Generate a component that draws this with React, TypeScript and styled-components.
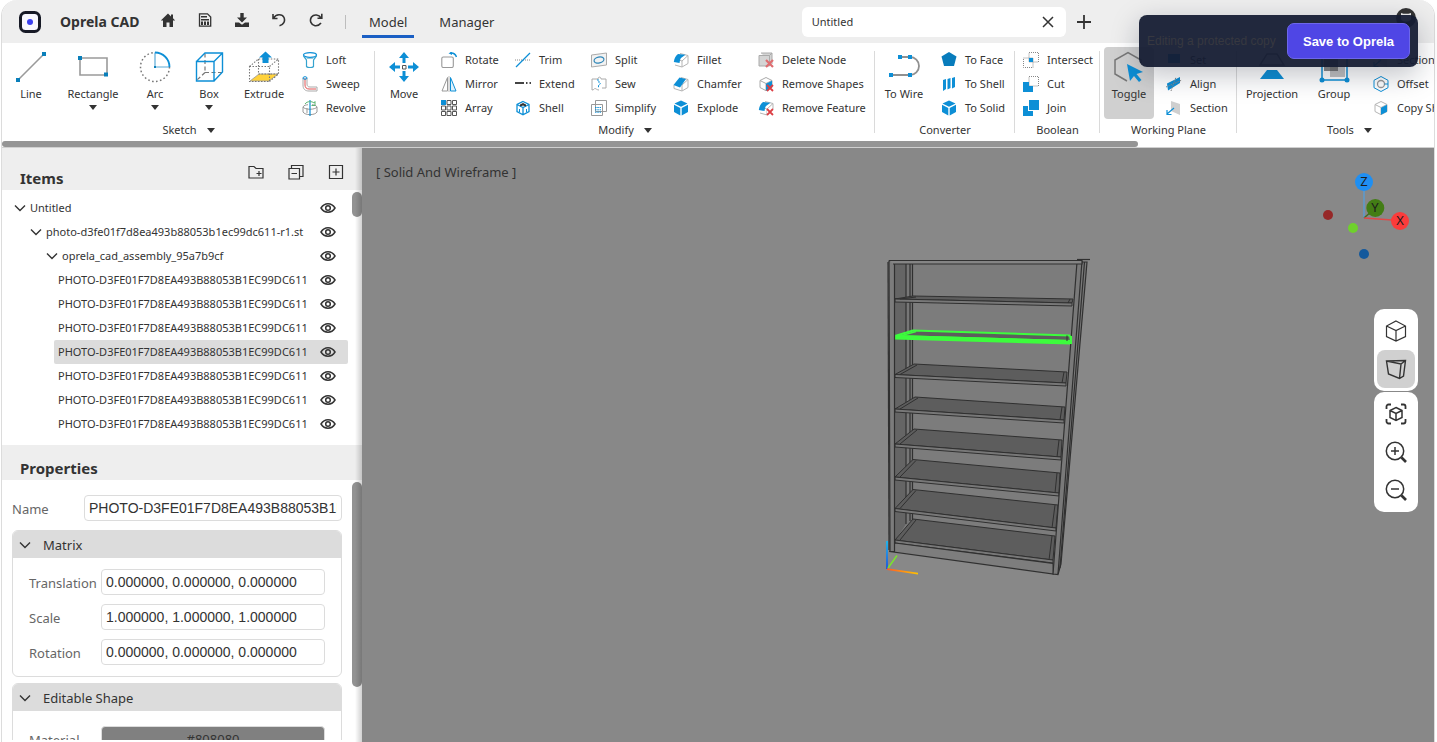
import React, { useState } from "react";
import styled, { createGlobalStyle } from "styled-components";

const BLUE = "#0d8fd6";
const GREY = "#9a9a9a";
const INK = "#333333";

const GlobalStyle = createGlobalStyle`
  * { box-sizing: border-box; }
  body {
    margin: 0;
    background: #ffffff;
    color: ${INK};
    font-family: "Noto Sans", sans-serif;
    font-size: 11px;
    line-height: 16px;
  }
  button {
    border: 0;
    padding: 0;
    background: none;
    color: inherit;
    font: inherit;
    cursor: pointer;
  }
  svg { display: block; flex: none; }
`;

/* ---------- Icons ---------- */

const Svg = ({ size = 16, box = size, children }: { size?: number; box?: number; children: React.ReactNode }) => (
  <svg width={size} height={size} viewBox={`0 0 ${box} ${box}`} fill="none" aria-hidden="true">
    {children}
  </svg>
);

const Cross = () => <path d="M9 9l6 6M15 9l-6 6" stroke="#dc3f45" strokeWidth="1.800" />;

const cubeEdges = "M8 1.500l6 3v7l-6 3.200-6-3.200v-7zM2 4.500l6 3 6-3M8 7.500v7";

const big: Record<string, React.ReactNode> = {
  Line: (
    <>
      <path d="M4 28L28 4" stroke={GREY} strokeWidth="1.600" />
      <path d="M1 27h4v4H1zM27 1h4v4h-4z" fill="#0a7fba" />
    </>
  ),
  Rectangle: (
    <>
      <path d="M3 7h27v17H3z" stroke={GREY} strokeWidth="1.600" />
      <path d="M1 5h4v4H1zM27 21.500h4v4h-4z" fill="#0a7fba" />
    </>
  ),
  Arc: (
    <>
      <circle cx="16" cy="16" r="14.500" stroke="#777" strokeWidth="1.500" strokeDasharray="1.600 2.400" />
      <path d="M16 0h16v16H16z" fill="#fff" />
      <path d="M16 15.500V1.500M16.500 16H30" stroke="#5aa9d6" strokeWidth="1.200" />
      <path d="M16 1.500A14.500 14.500 0 0 1 30.500 16" stroke={BLUE} strokeWidth="1.800" />
      <path d="M15 15h2v2h-2z" fill="#0a7fba" />
    </>
  ),
  Box: (
    <>
      <path d="M12 2.500v19M12 21.500h17M12 21.500L4 29" stroke="#777" strokeWidth="1.200" strokeDasharray="4 2.500" />
      <path d="M3.500 10.500h17.500v19.500H3.500zM3.500 10.500l8.500-8.500h17.500v19l-8.500 9M21 10.500l8.500-8.500" stroke={BLUE} strokeWidth="1.400" />
    </>
  ),
  Extrude: (
    <>
      <path d="M2 30l9-7h19l-9 7z" fill="#ffd23c" stroke="#999" strokeWidth=".8" />
      <path d="M1.500 15.500h20v15h-20zM1.500 15.500l9-7.500h20v15l-9 7.500M21.500 15.500l9-7.500M10.500 8v15h20" stroke="#777" strokeWidth="1.100" strokeDasharray="1.500 1.500" />
      <path d="M17.500.5l6.500 6h-3.500v5.500h-6V6.500H11z" fill={BLUE} />
    </>
  ),
  Move: (
    <>
      <path d="M16 1l5 6h-3.500v5h-3V7H11zM16 31l-5-6h3.500v-5h3v5H21zM1 16l6-5v3.500h5v3H7V21zM31 16l-6 5v-3.500h-5v-3h5V11z" fill={BLUE} />
      <path d="M14.500 14.500h3.500v3.500h-3.500z" stroke="#555" />
    </>
  ),
  "To Wire": (
    <>
      <path d="M13 6h9a9 9 0 0 1 0 18H4" stroke="#909090" strokeWidth="1.800" />
      <path d="M10 4h4v4h-4zM20 4h4v4h-4zM1 22h4v4H1zM20 22h4v4h-4z" fill={BLUE} />
    </>
  ),
  Toggle: (
    <>
      <path d="M28 12V9L15 1.500 2 9v14l12 7" stroke="#777" strokeWidth="1.500" />
      <path d="M14 13l16 8-6.500 2 5 6-2.500 2-5-6-4 5z" fill={BLUE} />
    </>
  ),
  Projection: (
    <>
      <path d="M4 14l7-11h10l7 11z" stroke="#777" strokeWidth="1.400" />
      <path d="M4 28l7-9h10l7 9z" fill={BLUE} />
    </>
  ),
  Group: (
    <>
      <path d="M6 4h14v16H6z" fill="#8a8a8a" />
      <path d="M12 15h15v11H12z" fill="#c2c2c2" />
      <path d="M12 15h8v5h-8z" fill="#777" />
      <path d="M4 3h25v26H4z" stroke={BLUE} strokeWidth="1.500" />
      <circle cx="4" cy="29" r="2.500" fill={BLUE} />
      <circle cx="29" cy="29" r="2.500" fill={BLUE} />
      <circle cx="4" cy="3" r="2.500" fill={BLUE} />
      <circle cx="29" cy="3" r="2.500" fill={BLUE} />
    </>
  ),
};

const FilletShape = () => (
  <>
    <path d="M7 1.500l8 2v8l-6 3.500-7-2M9 15V9l6-5.500M9 9L6 8" stroke="#b5b5b5" />
    <path d="M5 2l7.500 .8-4.500 3.200c-1 1-1 3-1.500 5L.8 10C1.500 6 2.500 4 5 2z" fill={BLUE} />
  </>
);

const SolidCube = () => (
  <path d="M8 .5l6.500 3L8 6.800 1.500 3.500zM1 4.800l6.300 3.200v7.500L1 12zM15 4.800L8.700 8v7.500L15 12z" fill={BLUE} />
);

const small: Record<string, React.ReactNode> = {
  Loft: (
    <>
      <ellipse cx="8" cy="3" rx="6.500" ry="2.300" stroke={BLUE} strokeWidth="1.300" />
      <path d="M1.500 3.500c0 2 3 3 3 5v6c1.500 1.500 5.500 1.500 7 0v-6c0-2 3-3 3-5" stroke="#35a3cf" strokeWidth="1.200" />
      <path d="M5 6.500h6" stroke="#9cd" />
    </>
  ),
  Sweep: (
    <>
      <path d="M1 2v7c0 4 2 6 6 6h8v-4H8c-2 0-3-1-3-3V2" stroke="#aaa" />
      <path d="M3 2v7c0 2.500 1.500 4 4 4h7" stroke="#e05252" />
      <ellipse cx="3" cy="2" rx="2" ry="1.300" stroke={BLUE} />
    </>
  ),
  Revolve: (
    <>
      <path d="M1 7v5c2 3.500 12 3.500 14 0V7c-2 3-12 3-14 0z" stroke="#999" />
      <path d="M1 7c1-2 3-2 5-2.300M15 7c-1-2-3-2-5-2.300M5 8v5" stroke="#999" />
      <path d="M8 0v16" stroke={BLUE} strokeWidth="1.200" />
      <path d="M3 4c2-3 7-3 9-1l1-1.500v4H9.500" stroke="#5cb573" />
    </>
  ),
  Rotate: (
    <>
      <rect x=".8" y="5" width="11.500" height="10.500" rx="1.500" stroke="#999" strokeWidth="1.100" />
      <path d="M9 1c3-.500 5.500 1 6.500 4" stroke={BLUE} strokeWidth="1.500" />
      <path d="M11 0L7.500 1.200 11 3" fill={BLUE} />
    </>
  ),
  Mirror: (
    <>
      <path d="M6.500 1.500v13.500H1z" stroke="#999" />
      <path d="M9.500 1.500v13.500H15z" stroke={BLUE} fill="#dff1fb" />
      <path d="M8 0v16" stroke="#bbb" />
    </>
  ),
  Array: (
    <>
      <path d="M0 0h5v5H0z" fill={BLUE} />
      <path d="M6 .5h4v4H6zM11.500.5h4v4h-4zM.5 6h4v4h-4zM6 6h4v4H6zM11.500 6h4v4h-4zM.5 11.500h4v4h-4zM6 11.500h4v4H6zM11.500 11.500h4v4h-4z" stroke="#555" />
    </>
  ),
  Trim: (
    <>
      <path d="M0 8h16" stroke="#888" strokeDasharray="1 1" />
      <path d="M1 15L15 1" stroke={BLUE} strokeWidth="1.200" />
    </>
  ),
  Extend: <path d="M0 7h9M11 7h1.500M14.500 7H16" stroke="#444" strokeWidth="2" />,
  Shell: (
    <>
      <path d={cubeEdges} stroke={BLUE} strokeWidth="1.300" />
      <path d="M8 3l3 1.500v2L8 5.500 5 6.500v-2z" fill="#333" />
      <path d="M4.500 9v3M11.500 9v3" stroke={BLUE} />
    </>
  ),
  Split: (
    <>
      <path d="M.5 3l15-2v12l-15 2z" stroke="#aaa" fill="#f2f2f2" />
      <ellipse cx="8" cy="8" rx="5" ry="3" transform="rotate(-12 8 8)" stroke="#2e86b8" strokeWidth="1.200" />
    </>
  ),
  Sew: (
    <>
      <path d="M7 3H1v11c2 0 2-1.500 3-1.500s2 1.500 4 1.500M7 3c0-2.500 3-2.500 3 0h5v9h-4" stroke="#aaa" />
      <path d="M7 3v3c3-1 3 3 .5 3V12" stroke={BLUE} strokeDasharray="2 1" />
    </>
  ),
  Simplify: (
    <>
      <path d="M.5 4.500h11v11H.5zM4.500.5h11v11h-11z" stroke="#999" />
      <path d="M4 7.500h6M4 9.800h6M4 12.200h6" stroke={BLUE} strokeDasharray="1.500 .8" />
    </>
  ),
  Fillet: <FilletShape />,
  Chamfer: (
    <>
      <path d="M8 1.500l7 2v8L9 15l-8-2.500V9M9 15V9l6-5.500" stroke="#b5b5b5" />
      <path d="M6.500 1.500l6.500 1.500-6 8.500L.5 9z" fill={BLUE} />
    </>
  ),
  Explode: <SolidCube />,
  "Delete Node": (
    <>
      <path d="M3 1h11v11M1 3.500h10.500V14H1zM11.500 3.500L14 1" fill="#d4d4d4" stroke="#aaa" />
      <path d="M8 8l7 7M15 8l-7 7" stroke="#df6d70" strokeWidth="2.200" />
    </>
  ),
  "Remove Shapes": (
    <>
      <path d={cubeEdges} stroke="#aaa" />
      <path d="M8 7.800l6-3v7l-6 3z" fill={BLUE} />
      <Cross />
    </>
  ),
  "Remove Feature": (
    <>
      <FilletShape />
      <path d="M9 9h7v7H9z" fill="#fff" />
      <Cross />
    </>
  ),
  "To Face": <path d="M8 0l7.500 4.500-2.500 9.500H3L.5 4.500z" fill="#087cbc" />,
  "To Shell": <path d="M2 4l3-1v10l-3 2zM6.500 3l3-1v10l-3 1.500zM11 2l3-1v10l-3 1.500z" fill={BLUE} />,
  "To Solid": <SolidCube />,
  Intersect: (
    <>
      <path d="M6 .5h9.500V10H6zM.5 6H10v9.500H.5z" stroke="#888" strokeDasharray="1 1" />
      <path d="M6 6h4v4H6z" fill={BLUE} />
    </>
  ),
  Cut: (
    <>
      <path d="M6 .5h9.500V10H6z" stroke="#888" strokeDasharray="1 1" />
      <path d="M0 6h6v4h4v6H0z" fill={BLUE} />
    </>
  ),
  Join: <path d="M6 0h10v10H6zM0 6h5v5h5v5H0z" fill={BLUE} />,
  Set: <path d="M2 2h12v9H2z" fill={BLUE} />,
  Align: (
    <>
      <path d="M1 7.500l13-6.500v6L2 14.500z" fill={BLUE} />
      <path d="M0 11L16 4M5 15l5-14" stroke="#888" strokeDasharray="1.500 1" />
    </>
  ),
  Section: (
    <>
      <path d="M5 1l9 3v11l-9-4z" fill="#cfcfcf" />
      <path d="M8 8l-7 6M1 10v4.500h4.500" stroke={BLUE} strokeWidth="1.200" />
    </>
  ),
  Offset: (
    <>
      <path d="M8 .5l7 3.800v7.400L8 15.500 1 11.700V4.300z" stroke={BLUE} />
      <circle cx="8" cy="8" r="3.500" stroke="#999" strokeWidth="1.300" />
      <path d="M11.500 8H15" stroke={BLUE} />
    </>
  ),
  "Copy Shape": (
    <>
      <path d={cubeEdges} stroke="#b5b5b5" />
      <path d="M8 7.800l6-3v7l-6 3z" fill={BLUE} />
    </>
  ),
};

const Eye = () => (
  <Svg>
    <path d="M1 8c3.500-5.600 10.500-5.600 14 0-3.500 5.600-10.500 5.600-14 0z" stroke={INK} strokeWidth="1.500" />
    <circle cx="8" cy="8" r="2.300" stroke={INK} strokeWidth="1.500" />
  </Svg>
);

const Chevron = () => (
  <Svg size={12}>
    <path d="M1 3.500l5 5 5-5" stroke={INK} strokeWidth="1.400" />
  </Svg>
);

/* ---------- Window and title bar ---------- */

const Window = styled.div`
  display: flex;
  flex-direction: column;
  height: 100vh;
  margin: 0 2px 0 1px;
  border: solid #dcdcdc;
  border-width: 0 1px;
  border-radius: 16px 16px 0 0;
  overflow: hidden;
`;

const TitleBar = styled.header`
  display: flex;
  align-items: center;
  flex: none;
  height: 43px;
  padding: 0 18px 0 17px;
  background: #eeeeee;
`;

const Brand = styled.div`
  display: flex;
  align-items: center;
  gap: 19px;
  width: 137px;
  font-size: 14px;
  font-weight: 700;
  line-height: 20px;
  white-space: nowrap;
`;

const QuickActions = styled.div`
  display: flex;
  gap: 13px;
  height: 28px;
  padding-right: 17px;
`;

const IconButton = styled.button<{ $w?: number }>`
  display: flex;
  align-items: center;
  justify-content: center;
  width: ${(p) => p.$w ?? 24}px;
  height: 24px;
`;

const Divider = styled.span`
  width: 1px;
  height: 14px;
  background: #bdbdbd;
`;

const Tabs = styled.nav`
  display: flex;
  gap: 18px;
  margin-left: 16px;
`;

const Tab = styled.button<{ $active?: boolean }>`
  height: 32px;
  padding: 4px 7px 0;
  border-bottom: 3px solid ${(p) => (p.$active ? "#1a5fc4" : "transparent")};
  font-size: 13px;
  line-height: 20px;
`;

const DocTabs = styled.div`
  display: flex;
  align-items: center;
  gap: 6px;
  margin: 0 auto;
`;

const DocTab = styled.div`
  display: flex;
  align-items: center;
  justify-content: space-between;
  width: 264px;
  height: 30px;
  padding: 0 6px 0 10px;
  border-radius: 6px;
  background: #ffffff;
`;

/* ---------- Ribbon ---------- */

const RibbonArea = styled.section`
  flex: none;
  background: #ffffff;
  border-bottom: 1px solid #d0d0d0;
  overflow: hidden;
`;

const Ribbon = styled.div`
  display: flex;
  height: 98px;
  padding-top: 4px;
`;

const Group = styled.div`
  position: relative;
  display: flex;
  flex-direction: column;
  flex: none;
  &::after {
    content: "";
    position: absolute;
    right: 0;
    top: 4px;
    width: 1px;
    height: 82px;
    background: #dadada;
  }
`;

const GroupBody = styled.div<{ $flush?: boolean }>`
  display: flex;
  height: 72px;
  padding-left: ${(p) => (p.$flush ? 0 : 4)}px;
  padding-right: 1px;
`;

const GroupLabel = styled.div`
  display: flex;
  align-items: center;
  justify-content: center;
  gap: 10px;
  height: 24px;
`;

const Caret = styled.span`
  border: 4px solid transparent;
  border-top: 5px solid ${INK};
  border-bottom: 0;
`;

const BigButton = styled.button<{ $w: number; $active?: boolean }>`
  display: flex;
  flex-direction: column;
  align-items: center;
  flex: none;
  gap: 3px;
  width: ${(p) => p.$w}px;
  margin-right: 4px;
  padding-top: 4px;
  border-radius: 4px;
  background: ${(p) => (p.$active ? "#d0d0d0" : "transparent")};
  white-space: nowrap;
`;

const Column = styled.div<{ $w: number }>`
  display: flex;
  flex-direction: column;
  flex: none;
  width: ${(p) => p.$w}px;
  padding: 1px 0 0 8px;
`;

const SmallButton = styled.button`
  display: flex;
  align-items: center;
  flex: none;
  gap: 8px;
  height: 24px;
  white-space: nowrap;
`;

const HorizontalThumb = styled.div`
  width: 79.3%;
  height: 6px;
  border-radius: 3px;
  background: #959595;
`;

type BigSpec = { name: string; w: number; caret?: boolean; active?: boolean };
type ColSpec = { w: number; items: string[] };
type GroupSpec = { label: string; caret?: boolean; bigs: BigSpec[]; cols: ColSpec[] };

const groups: GroupSpec[] = [
  {
    label: "Sketch",
    caret: true,
    bigs: [
      { name: "Line", w: 50 },
      { name: "Rectangle", w: 66, caret: true },
      { name: "Arc", w: 50, caret: true },
      { name: "Box", w: 50, caret: true },
      { name: "Extrude", w: 52 },
    ],
    cols: [{ w: 80, items: ["Loft", "Sweep", "Revolve"] }],
  },
  {
    label: "Modify",
    caret: true,
    bigs: [{ name: "Move", w: 50 }],
    cols: [
      { w: 74, items: ["Rotate", "Mirror", "Array"] },
      { w: 76, items: ["Trim", "Extend", "Shell"] },
      { w: 82, items: ["Split", "Sew", "Simplify"] },
      { w: 85, items: ["Fillet", "Chamfer", "Explode"] },
      { w: 124, items: ["Delete Node", "Remove Shapes", "Remove Feature"] },
    ],
  },
  {
    label: "Converter",
    bigs: [{ name: "To Wire", w: 50 }],
    cols: [{ w: 81, items: ["To Face", "To Shell", "To Solid"] }],
  },
  { label: "Boolean", bigs: [], cols: [{ w: 84, items: ["Intersect", "Cut", "Join"] }] },
  {
    label: "Working Plane",
    bigs: [{ name: "Toggle", w: 50, active: true }],
    cols: [{ w: 78, items: ["Set", "Align", "Section"] }],
  },
  {
    label: "Tools",
    caret: true,
    bigs: [
      { name: "Projection", w: 62 },
      { name: "Group", w: 54 },
    ],
    cols: [{ w: 96, items: ["Section", "Offset", "Copy Shape"] }],
  },
];

/* ---------- Side panel ---------- */

const Workspace = styled.div`
  display: flex;
  flex: 1;
  min-height: 0;
`;

const Side = styled.aside`
  position: relative;
  display: flex;
  flex-direction: column;
  flex: none;
  width: 360px;
  padding-bottom: 2px;
  background: #ffffff;
  overflow: hidden;
  &::after {
    content: "";
    position: absolute;
    inset: 0 0 0 auto;
    width: 7px;
    background: linear-gradient(to right, transparent, rgba(0, 0, 0, 0.18));
    pointer-events: none;
  }
`;

const PanelHead = styled.div<{ $h: number }>`
  display: flex;
  align-items: flex-end;
  justify-content: space-between;
  flex: none;
  height: ${(p) => p.$h}px;
  padding: 0 14px 1px 18px;
  background: #eeeeee;
`;

const PanelTitle = styled.h2`
  margin: 0;
  font-size: 15px;
  font-weight: 700;
  line-height: 22px;
`;

const HeadActions = styled.div`
  display: flex;
  gap: 16px;
  padding-bottom: 5px;
`;

const ScrollRegion = styled.div<{ $h?: number }>`
  position: relative;
  flex: ${(p) => (p.$h ? "none" : "1")};
  height: ${(p) => (p.$h ? `${p.$h}px` : "auto")};
  min-height: 0;
  overflow: hidden;
`;

const Thumb = styled.div<{ $h: number }>`
  position: absolute;
  top: 2px;
  right: 0;
  width: 10px;
  height: ${(p) => p.$h}px;
  border-radius: 5px;
  background: #929292;
`;

const Tree = styled.ul`
  margin: 0;
  padding: 6px 14px 0 8px;
  list-style: none;
`;

const TreeRow = styled.li<{ $indent: number; $selected?: boolean }>`
  display: flex;
  align-items: center;
  gap: 4px;
  height: 24px;
  margin-left: ${(p) => p.$indent}px;
  padding: 0 12px 0 4px;
  border-radius: 2px;
  background: ${(p) => (p.$selected ? "#dcdcdc" : "transparent")};
`;

const TreeName = styled.span`
  flex: 1;
  margin-right: 4px;
  overflow: hidden;
  white-space: nowrap;
`;

const Form = styled.div`
  display: flex;
  flex-direction: column;
  padding: 15px 20px 0 10px;
`;

const Field = styled.label`
  display: flex;
  align-items: center;
  height: 26px;
  color: #666666;
  font-size: 13px;
  line-height: 20px;
`;

const FieldName = styled.span<{ $w: number }>`
  flex: none;
  width: ${(p) => p.$w}px;
  padding-top: 2px;
`;

const TextInput = styled.input`
  flex: 1;
  min-width: 0;
  height: 26px;
  padding: 0 4px;
  border: 1px solid #dcdcdc;
  border-radius: 4px;
  color: ${INK};
  background: #ffffff;
  font: 14px "Liberation Sans", sans-serif;
`;

const Card = styled.section`
  margin-top: 9px;
  border: 1px solid #dcdcdc;
  border-radius: 6px;
  overflow: hidden;
  & + & { margin-top: 6px; }
`;

const CardHead = styled.button`
  display: flex;
  align-items: center;
  gap: 12px;
  width: 100%;
  height: 27px;
  padding: 0 6px;
  background: #dcdcdc;
  font-size: 13px;
`;

const CardBody = styled.div`
  display: flex;
  flex-direction: column;
  gap: 9px;
  padding: 11px 16px;
`;

const Swatch = styled.button`
  flex: 1;
  height: 26px;
  border: 1px solid #dcdcdc;
  border-radius: 4px;
  color: #333333;
  background: #808080;
  font-size: 13px;
`;

const MaterialBody = styled(CardBody)`
  padding-top: 15px;
`;

/* ---------- Viewport ---------- */

const Viewport = styled.main`
  position: relative;
  flex: 1;
  min-width: 0;
  background: #888888;
`;

const Scene = styled.svg`
  position: absolute;
  inset: 0;
  width: 100%;
  height: 100%;
`;

const ModeLabel = styled.div`
  position: absolute;
  left: 14px;
  top: 14px;
  font-size: 13px;
  line-height: 20px;
`;

const Gizmo = styled.svg`
  position: absolute;
  top: 22px;
  right: 20px;
`;

const ViewTools = styled.div`
  position: absolute;
  right: 16px;
  top: 161px;
  display: flex;
  flex-direction: column;
  gap: 1px;
`;

const ToolStack = styled.div`
  display: flex;
  flex-direction: column;
  padding: 3px;
  border-radius: 10px;
  background: #ffffff;
`;

const ViewButton = styled.button<{ $active?: boolean }>`
  display: flex;
  align-items: center;
  justify-content: center;
  width: 38px;
  height: 38px;
  border-radius: 8px;
  background: ${(p) => (p.$active ? "#d0d0d0" : "transparent")};
`;

/* ---------- Save banner ---------- */

const Banner = styled.div`
  position: absolute;
  top: 15px;
  right: 19px;
  display: flex;
  align-items: center;
  justify-content: space-between;
  width: 279px;
  height: 52px;
  padding: 0 8px;
  border-radius: 8px;
  color: #373840;
  background: rgba(21, 28, 51, 0.95);
  box-shadow: 0 8px 28px rgba(15, 23, 42, 0.26);
  font: 12px "Liberation Sans", sans-serif;
`;

const SaveButton = styled.button`
  width: 123px;
  height: 36px;
  border: 1px solid #6d67ea;
  border-radius: 7px;
  color: #ffffff;
  background: #4f46e5;
  font: 700 13px "Liberation Sans", sans-serif;
`;

/* Shelf corners: back-left, back-right, front-right, front-left, plus lip thickness */
type Shelf = { pts: [number, number][]; lip: number; picked?: boolean };

const shelves: Shelf[] = [
  { pts: [[913, 296], [1073, 299], [1072, 303], [895, 299]], lip: 3 },
  { pts: [[914, 364], [1067, 372], [1066, 383], [895, 374.5]], lip: 3 },
  { pts: [[915, 397], [1065, 407], [1064, 420], [895, 409]], lip: 3 },
  { pts: [[914, 429], [1062, 440], [1061, 457], [895, 444]], lip: 3 },
  { pts: [[913, 459.5], [1060, 473], [1059, 493], [895, 477]], lip: 3 },
  { pts: [[913, 489.5], [1058, 505], [1056, 528], [895, 508.5]], lip: 3 },
  { pts: [[913, 519], [1055, 536], [1053, 560], [895, 540]], lip: 3 },
  { pts: [[913, 330.5], [1070, 335.5], [1071, 341], [895, 336]], lip: 2.5, picked: true },
];

const path = (pts: number[][]) => "M" + pts.map((p) => p.join(" ")).join("L") + "Z";

const ShelfShape = ({ shelf }: { shelf: Shelf }) => {
  const [bl, br, fr, fl] = shelf.pts;
  const lip = [fl, fr, [fr[0], fr[1] + shelf.lip], [fl[0], fl[1] + shelf.lip]];
  const line = shelf.picked ? "#3dfc3d" : "#303030";
  return (
    <g stroke={line} strokeWidth={shelf.picked ? 2 : 1} strokeLinejoin="round">
      <path d={path(shelf.pts)} fill="#5d5d5d" />
      <path d={path(lip)} fill={shelf.picked ? "#3dfc3d" : "#787878"} />
      <path
        d={`M${fl[0] + 5} ${fl[1]}L${bl[0] + 3} ${bl[1] + 1}`}
        strokeWidth={shelf.picked ? 1.5 : 1}
      />
      <path d={`M${fr[0] - 4} ${fr[1]}L${br[0] - 3} ${br[1]}`} stroke="#303030" strokeWidth="1" />
    </g>
  );
};

const Bookcase = () => (
  <Scene viewBox="362 148 1072 594" preserveAspectRatio="xMidYMid meet" role="img" aria-label="Bookcase model">
    <defs>
      <linearGradient id="axisZ" x1="0" y1="0" x2="0" y2="1">
        <stop offset="0" stopColor="#22b4e8" />
        <stop offset="1" stopColor="#2456d8" />
      </linearGradient>
      <linearGradient id="axisX">
        <stop offset="0" stopColor="#ff5a28" />
        <stop offset="1" stopColor="#ffc400" />
      </linearGradient>
    </defs>
    <path d="M895 264L1077 264L1053 563L895 543Z" fill="#7c7c7c" />
    <path d="M895 264H906V524L895 541Z" fill="#656565" />
    <path d="M906 264H912V521L906 527Z" fill="#777" />
    <g stroke="#303030" strokeWidth="1.200" fill="none">
      <path d="M906 264V524M910 264V521M912.500 264V520" />
    </g>
    {shelves.map((s, i) => (
      <ShelfShape key={i} shelf={s} />
    ))}
    <g stroke="#303030" strokeWidth="1.200">
      <path d="M895 543L1053 563.500L1053.500 574L890 551.500Z" fill="#7d7d7d" />
      <path d="M1077 262H1087L1061 564L1058 574.500L1053 574Z" fill="#797979" />
      <path d="M1082 261L1058 574M1084.500 262L1060 568" fill="none" />
      <path d="M889 261H894.500V551.500L890 551.500Z" fill="#7c7c7c" />
      <path d="M888 262L889 550" fill="none" />
      <path d="M889 260.500H1082V264H893" fill="#858585" />
      <path d="M1077 259.500H1090" fill="none" />
    </g>
    <path d="M1071 336V344" stroke="#3dfc3d" strokeWidth="2" />
    <path d="M886 541h2v28h-2z" fill="url(#axisZ)" />
    <path d="M888 568L897 555.500" stroke="#7be32c" strokeWidth="1.500" />
    <path d="M887 568.200L918 572.800V574.600L887 570Z" fill="url(#axisX)" />
  </Scene>
);

const PART = "PHOTO-D3FE01F7D8EA493B88053B1EC99DC611";

const treeRows = [
  { name: "Untitled", indent: 0, open: true },
  { name: "photo-d3fe01f7d8ea493b88053b1ec99dc611-r1.st", indent: 16, open: true },
  { name: "oprela_cad_assembly_95a7b9cf", indent: 32, open: true },
  ...Array.from({ length: 7 }, () => ({ name: PART, indent: 44, open: false })),
];

const matrix = [
  ["Translation", "0.000000, 0.000000, 0.000000"],
  ["Scale", "1.000000, 1.000000, 1.000000"],
  ["Rotation", "0.000000, 0.000000, 0.000000"],
];

export default function App() {
  const [selected, setSelected] = useState(6);

  return (
    <>
      <GlobalStyle />
      <Window>
        <TitleBar>
          <Brand>
            <Svg size={22}>
              <rect x="1.500" y="1.500" width="19" height="19" rx="5" fill="#f8f8ff" stroke="#171a26" strokeWidth="3" />
              <circle cx="11" cy="11" r="3" fill="#3b3ff0" />
            </Svg>
            Oprela CAD
          </Brand>
          <QuickActions>
            <IconButton aria-label="Home">
              <Svg size={16}>
                <path d="M8 1.500L.8 8.500H3V15h3.500v-4.500h3V15H13V8.500h2.200L13 6.300V2.500h-2v2z" fill={INK} />
              </Svg>
            </IconButton>
            <IconButton aria-label="Save">
              <Svg size={14}>
                <path d="M1.500.8h8L12.700 4v9.200h-11.200z" stroke={INK} strokeWidth="1.300" />
                <path d="M3 3h6v1.500H3zM3 6h8v1.500H3zM3 8.500h2V12H3zM6 8.500h2V12H6zM9 8.500h2V12H9z" fill={INK} />
              </Svg>
            </IconButton>
            <IconButton aria-label="Download">
              <Svg size={14}>
                <path d="M5.300 0h3.400v4.500H12L7 9.500 2 4.500h3.300zM0 9.500h4l3 2.300 3-2.300h4V14H0z" fill={INK} />
              </Svg>
            </IconButton>
            <IconButton aria-label="Undo">
              <Svg size={14}>
                <path d="M1 1v4.500h4.500M1.500 5C4 1 10 .5 12 4.500c1.500 3.500-.5 7.500-4.500 8.300" stroke={INK} strokeWidth="1.600" />
              </Svg>
            </IconButton>
            <IconButton aria-label="Redo">
              <Svg size={14}>
                <path d="M12.800.8v4.400H8.500M12 5C10 1.500 5 .8 2.500 4 .2 7.500 2 12 6 12.700c2.500.3 4.500-.7 6-2.700" stroke={INK} strokeWidth="1.600" />
              </Svg>
            </IconButton>
          </QuickActions>
          <Divider />
          <Tabs>
            <Tab $active>Model</Tab>
            <Tab>Manager</Tab>
          </Tabs>
          <DocTabs>
            <DocTab>
              Untitled
              <IconButton aria-label="Close tab">
                <Svg size={12}>
                  <path d="M1 1l10 10M11 1L1 11" stroke={INK} strokeWidth="1.500" />
                </Svg>
              </IconButton>
            </DocTab>
            <IconButton aria-label="New tab">
              <Svg size={14}>
                <path d="M7 0v14M0 7h14" stroke={INK} strokeWidth="1.800" />
              </Svg>
            </IconButton>
          </DocTabs>
          <IconButton aria-label="GitHub" $w={20}>
            <svg width="20" height="28" viewBox="0 0 20 28" fill="none" aria-hidden="true">
              <circle cx="10" cy="10" r="10" fill={INK} />
              <path d="M5 5l2.500.8h5L15 5v6c-1 3.500-9 3.500-10 0z" fill="#eee" />
            </svg>
          </IconButton>
        </TitleBar>

        <RibbonArea>
          <Ribbon>
            {groups.map((g) => (
              <Group key={g.label}>
                <GroupBody $flush={!g.bigs.length}>
                  {g.bigs.map((b) => (
                    <BigButton key={b.name} $w={b.w} $active={b.active}>
                      <Svg size={32}>{big[b.name]}</Svg>
                      {b.name}
                      {b.caret && <Caret />}
                    </BigButton>
                  ))}
                  {g.cols.map((c) => (
                    <Column key={c.items[0]} $w={c.w}>
                      {c.items.map((name) => (
                        <SmallButton key={name}>
                          <Svg>{small[name]}</Svg>
                          {name}
                        </SmallButton>
                      ))}
                    </Column>
                  ))}
                </GroupBody>
                <GroupLabel>
                  {g.label}
                  {g.caret && <Caret />}
                </GroupLabel>
              </Group>
            ))}
          </Ribbon>
          <HorizontalThumb />
        </RibbonArea>

        <Workspace>
          <Side>
            <PanelHead $h={42}>
              <PanelTitle>Items</PanelTitle>
              <HeadActions>
                <IconButton aria-label="New folder">
                  <Svg>
                    <path d="M1 2.500h5l2 2h7v9.500H1zM11 7v5M8.500 9.500h5" stroke={INK} strokeWidth="1.200" />
                  </Svg>
                </IconButton>
                <IconButton aria-label="Collapse all">
                  <Svg>
                    <path d="M1 4.500h10.500V15H1zM3.500 4V1.500H15V12.500h-3M3.500 9.500H9" stroke={INK} strokeWidth="1.200" />
                  </Svg>
                </IconButton>
                <IconButton aria-label="Expand all">
                  <Svg>
                    <path d="M1.500 1.500h13v13h-13zM8 4.500v7M4.500 8h7" stroke={INK} strokeWidth="1.200" />
                  </Svg>
                </IconButton>
              </HeadActions>
            </PanelHead>
            <ScrollRegion $h={255}>
              <Tree>
                {treeRows.map((r, i) => (
                  <TreeRow key={i} $indent={r.indent} $selected={i === selected} onClick={() => setSelected(i)}>
                    {r.open && <Chevron />}
                    <TreeName>{r.name}</TreeName>
                    <Eye />
                  </TreeRow>
                ))}
              </Tree>
              <Thumb $h={25} />
            </ScrollRegion>
            <PanelHead $h={35}>
              <PanelTitle>Properties</PanelTitle>
            </PanelHead>
            <ScrollRegion>
              <Form>
                <Field>
                  <FieldName $w={72}>Name</FieldName>
                  <TextInput defaultValue={PART} />
                </Field>
                <Card>
                  <CardHead>
                    <Chevron />
                    Matrix
                  </CardHead>
                  <CardBody>
                    {matrix.map(([name, value]) => (
                      <Field key={name}>
                        <FieldName $w={72}>{name}</FieldName>
                        <TextInput defaultValue={value} />
                      </Field>
                    ))}
                  </CardBody>
                </Card>
                <Card>
                  <CardHead>
                    <Chevron />
                    Editable Shape
                  </CardHead>
                  <MaterialBody>
                    <Field>
                      <FieldName $w={72}>Material</FieldName>
                      <Swatch>#808080</Swatch>
                    </Field>
                  </MaterialBody>
                </Card>
              </Form>
              <Thumb $h={205} />
            </ScrollRegion>
          </Side>

          <Viewport>
            <Bookcase />
            <ModeLabel>[ Solid And Wireframe ]</ModeLabel>
            <Gizmo width="96" height="96" viewBox="1318 170 96 96" fontFamily="Noto Sans, sans-serif" fontSize="13" textAnchor="middle" fill="#1c1c1c">
              <path d="M1364 218V190" stroke="#5b9bd0" strokeWidth="1.500" />
              <path d="M1364 218L1372 211" stroke="#3f6e1e" strokeWidth="1.500" />
              <path d="M1364 218L1392 220" stroke="#e04848" strokeWidth="1.500" />
              <circle cx="1328" cy="215" r="5" fill="#962828" />
              <circle cx="1353" cy="228" r="5" fill="#6fd02c" />
              <circle cx="1364" cy="254" r="5" fill="#14599c" />
              <circle cx="1364" cy="182" r="9" fill="#1f8ff2" />
              <circle cx="1375.300" cy="208" r="9" fill="#437d15" />
              <circle cx="1400" cy="221" r="9" fill="#fb3b3b" />
              <text x="1364" y="186">Z</text>
              <text x="1375" y="212">Y</text>
              <text x="1400" y="225">X</text>
            </Gizmo>
            <ViewTools>
              <ToolStack>
                <ViewButton aria-label="Orthographic">
                  <Svg size={24}>
                    <path d="M12 2l9.500 5v10.500L12 22l-9.500-4.500V7zM2.500 7l9.500 4.500L21.500 7M12 11.500V22" stroke={INK} strokeWidth="1.200" />
                  </Svg>
                </ViewButton>
                <ViewButton $active aria-label="Perspective">
                  <Svg size={24}>
                    <path d="M2.500 4L21.500 3.500l-2 15.500-4 2.500L4.500 17zM2.500 4l14.500 3 4.500-3.500M17 7l-1.500 14.500" stroke={INK} strokeWidth="1.400" />
                  </Svg>
                </ViewButton>
              </ToolStack>
              <ToolStack>
                <ViewButton aria-label="Fit view">
                  <Svg size={24}>
                    <path d="M2.500 7V4.500a2 2 0 0 1 2-2H7M17 2.500h2.500a2 2 0 0 1 2 2V7M21.500 17v2.500a2 2 0 0 1-2 2H17M7 21.500H4.500a2 2 0 0 1-2-2V17" stroke={INK} strokeWidth="1.800" />
                    <path d="M12 5.500l6 3v7L12 18.500l-6-3v-7zM6 8.500l6 3 6-3M12 11.500v7" stroke={INK} strokeWidth="1.500" />
                  </Svg>
                </ViewButton>
                <ViewButton aria-label="Zoom in">
                  <Svg size={24}>
                    <circle cx="11" cy="11" r="8.700" stroke={INK} strokeWidth="1.500" />
                    <path d="M11 7v8M7 11h8" stroke={INK} strokeWidth="1.500" />
                    <path d="M17.500 17.500l4.500 4.500" stroke={INK} strokeWidth="2.600" />
                  </Svg>
                </ViewButton>
                <ViewButton aria-label="Zoom out">
                  <Svg size={24}>
                    <circle cx="11" cy="11" r="8.700" stroke={INK} strokeWidth="1.500" />
                    <path d="M7 11h8" stroke={INK} strokeWidth="1.500" />
                    <path d="M17.500 17.500l4.500 4.500" stroke={INK} strokeWidth="2.600" />
                  </Svg>
                </ViewButton>
              </ToolStack>
            </ViewTools>
          </Viewport>
        </Workspace>
      </Window>
      <Banner>
        Editing a protected copy
        <SaveButton>Save to Oprela</SaveButton>
      </Banner>
    </>
  );
}
